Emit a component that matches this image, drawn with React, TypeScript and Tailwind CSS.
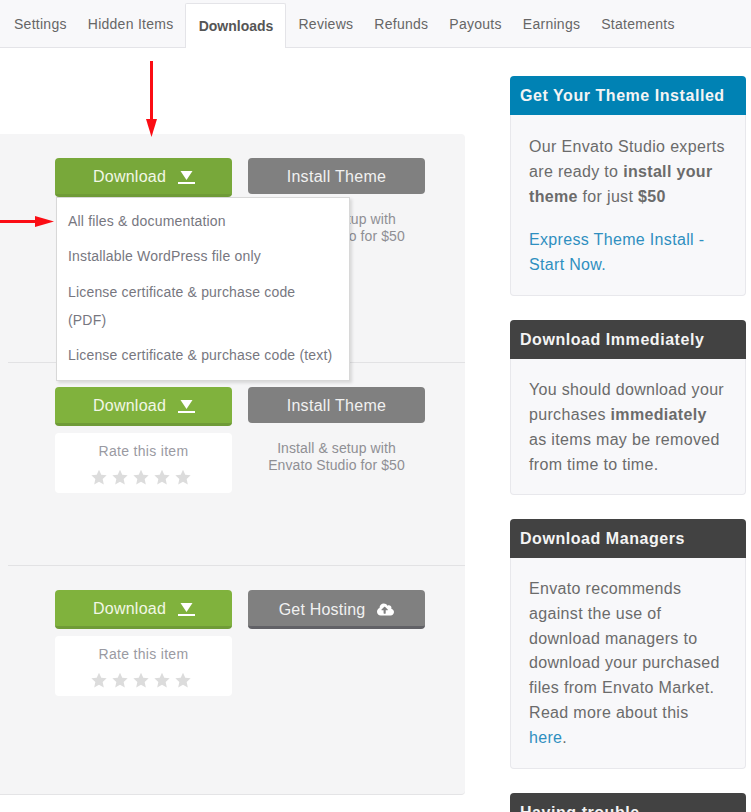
import { FaCloudUploadAlt } from "react-icons/fa";

const font = "font-['Liberation_Sans',Arial,sans-serif]";

function Star() {
  return (
    <svg width="16" height="16" viewBox="0 0 24 24" className="fill-[#dcdcdc]">
      <path d="M12 1l3.400 7.600 8.100.9-6 5.500 1.700 8.200L12 19l-7.200 4.200 1.700-8.200-6-5.500 8.100-.9z" />
    </svg>
  );
}

function DownloadButton({ dark }: { dark?: boolean }) {
  return (
    <button
      className={`flex h-[39px] w-[177px] items-center justify-center gap-[12px] rounded-[4px] border-b-[3px] pl-px pt-[2px] text-[16px] tracking-[0.25px] text-[#f2f7e6] ${
        dark ? "border-[#6f9b37] bg-[#78a83a]" : "border-[#6f9b37] bg-[#80b23d]"
      }`}
    >
      <span>Download</span>
      <svg width="17" height="15" viewBox="0 0 17 15" className="fill-white">
        <path d="M2.500 1h12L8.500 10z" />
        <rect x="0" y="12" width="17" height="2" />
      </svg>
    </button>
  );
}

function GrayButton({ children }: { children: React.ReactNode }) {
  return (
    <button className="flex h-[36px] w-[177px] items-center justify-center rounded-[4px] bg-[#808080] pt-px text-[16px] tracking-[0.3px] text-[#f1f1f1]">
      {children}
    </button>
  );
}

function RateCard() {
  return (
    <div className="mt-[7px] flex h-[60px] w-[177px] flex-col items-center rounded-[4px] bg-white pt-[8px]">
      <div className="text-[14px] leading-[20px] tracking-[0.3px] text-[#9a9aa2]">Rate this item</div>
      <div className="mr-[5px] mt-[8px] flex gap-[5px]">
        <Star />
        <Star />
        <Star />
        <Star />
        <Star />
      </div>
    </div>
  );
}

function InstallNote() {
  return (
    <div className="mt-[17px] w-[177px] text-center text-[14px] leading-[17px] tracking-[0.1px] text-[#8f8f94]">
      Install &amp; setup with
      <br />
      Envato Studio for $50
    </div>
  );
}

function Card({
  title,
  blue,
  h,
  children,
}: {
  title: string;
  blue?: boolean;
  h: string;
  children: React.ReactNode;
}) {
  return (
    <section className={`flex w-[236px] flex-col ${h}`}>
      <h3
        className={`flex h-[39px] shrink-0 items-center rounded-t-[4px] pl-[10px] text-[16px] font-bold tracking-[0.55px] text-[#f4f4f4] ${
          blue ? "bg-[#0082b4]" : "bg-[#424242]"
        }`}
      >
        {title}
      </h3>
      <div className="flex-1 overflow-hidden rounded-b-[4px] border border-t-0 border-[#e8e8ec] bg-[#f8f8fa] pl-[18px] pt-[18px] text-[16px] leading-[25px] tracking-[0.33px] text-[#6b6b6b]">
        {children}
      </div>
    </section>
  );
}

export default function App() {
  return (
    <div className={`relative h-[812px] w-[751px] overflow-hidden bg-white ${font}`}>
      <nav className="flex h-[48px] items-start border-b border-[#e4e4e8] bg-[#f8f8fa] pl-[14px] text-[14px] tracking-[0.27px] text-[#666]">
        <a className="mr-[21px] pt-[15px] leading-[18px]">Settings</a>
        <a className="mr-[12px] pt-[15px] leading-[18px]">Hidden Items</a>
        <a className="mt-[3px] h-[45px] w-[101px] rounded-t-[2px] border border-b-0 border-[#e4e4e8] bg-white pt-[13px] text-center font-bold leading-[18px] tracking-normal text-[#555]">
          Downloads
        </a>
        <a className="ml-[12px] mr-[21px] pt-[15px] leading-[18px]">Reviews</a>
        <a className="mr-[21px] pt-[15px] leading-[18px]">Refunds</a>
        <a className="mr-[21px] pt-[15px] leading-[18px]">Payouts</a>
        <a className="mr-[21px] pt-[15px] leading-[18px]">Earnings</a>
        <a className="pt-[15px] leading-[18px]">Statements</a>
      </nav>

      <div className="flex items-start">
        <main className="mt-[86px] w-[465px] rounded-r-[4px] border-b border-[#e4e4e6] bg-[#f5f5f6] pl-[55px]">
          <div className="relative h-[229px] pt-[24px]">
            <div className="flex gap-[16px]">
              <DownloadButton dark />
              <div>
                <GrayButton>Install Theme</GrayButton>
                <InstallNote />
              </div>
            </div>
            <div className="absolute bottom-0 left-[-47px] right-0 h-px bg-[#e2e2e4]" />
          </div>
          <div className="relative h-[203px] pt-[24px]">
            <div className="flex gap-[16px]">
              <div>
                <DownloadButton />
                <RateCard />
              </div>
              <div>
                <GrayButton>Install Theme</GrayButton>
                <InstallNote />
              </div>
            </div>
            <div className="absolute bottom-0 left-[-47px] right-0 h-px bg-[#e2e2e4]" />
          </div>
          <div className="h-[228px] pt-[24px]">
            <div className="flex gap-[16px]">
              <div>
                <DownloadButton />
                <RateCard />
              </div>
              <button className="flex h-[39px] w-[177px] items-center justify-center gap-[12px] rounded-[4px] border-b-[3px] border-[#616166] bg-[#808080] pt-[3px] text-[16px] tracking-[0.2px] text-[#f1f1f1]">
                <span>Get Hosting</span>
                <FaCloudUploadAlt className="text-[17px] text-white" />
              </button>
            </div>
          </div>
        </main>

        <aside className="ml-[45px] mt-[28px] flex flex-col gap-[24px]">
          <Card title="Get Your Theme Installed" blue h="h-[220px]">
            <p className="mt-px">
              Our Envato Studio experts
              <br />
              are ready to <b>install your</b>
              <br />
              <b>theme</b> for just <b>$50</b>
            </p>
            <p className="mt-[18px] text-[#2f8fc0]">
              Express Theme Install -
              <br />
              Start Now.
            </p>
          </Card>
          <Card title="Download Immediately" h="h-[175px]">
            <p>
              You should download your
              <br />
              purchases <b>immediately</b>
              <br />
              as items may be removed
              <br />
              from time to time.
            </p>
          </Card>
          <Card title="Download Managers" h="h-[250px]">
            <p className="mt-px leading-[24.8px]">
              Envato recommends
              <br />
              against the use of
              <br />
              download managers to
              <br />
              download your purchased
              <br />
              files from Envato Market.
              <br />
              Read more about this
              <br />
              <span className="text-[#2f8fc0]">here</span>.
            </p>
          </Card>
          <Card title="Having trouble" h="h-[80px]">
            <p />
          </Card>
        </aside>
      </div>

      <div className="absolute left-[56px] top-[197px] h-[184px] w-[294px] border border-[#d8d8d8] bg-white pl-[11px] pt-[9px] text-[14px] leading-[28px] tracking-[0.18px] text-[#77777f] shadow-[2px_2px_3px_rgba(0,0,0,0.12)]">
        <div className="pb-[7px]">All files &amp; documentation</div>
        <div className="pb-[8px]">Installable WordPress file only</div>
        <div className="pb-[7px]">
          License certificate &amp; purchase code
          <br />
          (PDF)
        </div>
        <div>License certificate &amp; purchase code (text)</div>
      </div>

      <svg className="absolute left-0 top-0" width="200" height="240" viewBox="0 0 200 240">
        <rect x="150" y="61" width="3" height="60" fill="#fb0d14" />
        <path d="M146 119h11l-5.500 18z" fill="#fb0d14" />
        <rect x="0" y="220" width="36" height="3" fill="#fb0d14" />
        <path d="M35 216l19 5.500-19 5.500z" fill="#fb0d14" />
      </svg>
    </div>
  );
}
